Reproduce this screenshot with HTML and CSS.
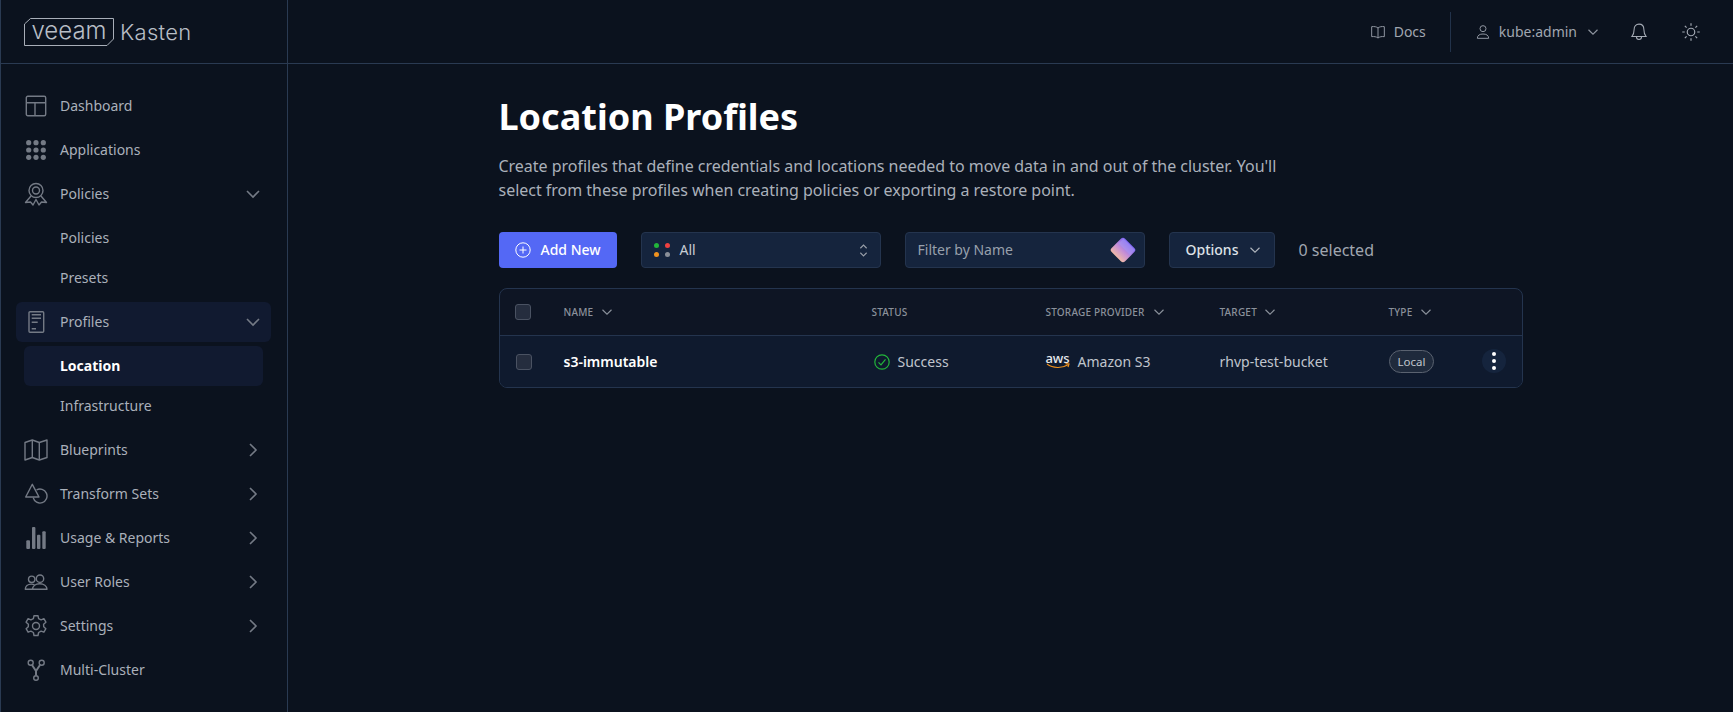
FILE: index.html
```html
<!DOCTYPE html>
<html lang="en">

<head>
    <meta charset="UTF-8">
    <meta name="viewport" content="width=device-width, initial-scale=1.0">
    <title>Location Profiles</title>
    <link rel="stylesheet" href="styles.css">
</head>

<body>
    <aside class="sidebar">
        <div class="brand">
            <span class="brand-box">
                <svg class="brand-outline" viewBox="0 0 90 28"><path d="M6.500 .5H89.500V21L83 27.500H.5V6z"/></svg>
                veeam
            </span>
            <span class="brand-name">Kasten</span>
        </div>
        <nav class="nav">
            <a class="nav-item">
                <svg class="nav-icon" viewBox="0 0 24 24"><rect x="2.300" y="2.300" width="19.400" height="19.400" rx="1.500"/><path d="M2.300 8.700h19.400M11 8.700v13"/></svg>
                <span class="nav-label">Dashboard</span>
            </a>
            <a class="nav-item">
                <svg class="nav-icon solid" viewBox="0 0 24 24"><circle cx="4.700" cy="4.700" r="2.600"/><circle cx="12" cy="4.700" r="2.600"/><circle cx="19.300" cy="4.700" r="2.600"/><circle cx="4.700" cy="12" r="2.600"/><circle cx="12" cy="12" r="2.600"/><circle cx="19.300" cy="12" r="2.600"/><circle cx="4.700" cy="19.300" r="2.600"/><circle cx="12" cy="19.300" r="2.600"/><circle cx="19.300" cy="19.300" r="2.600"/></svg>
                <span class="nav-label">Applications</span>
            </a>
            <a class="nav-item">
                <svg class="nav-icon" viewBox="0 0 24 24"><circle cx="12" cy="8.500" r="7"/><circle cx="12" cy="8.500" r="3.500"/><path d="M7 14 1.500 20.500l5-.5 2.500 3 3-5.500 3 5.500 2.500-3 5 .5L17 14"/></svg>
                <span class="nav-label">Policies</span>
                <svg class="chev" viewBox="0 0 16 16"><path d="M2 5l6 6 6-6"/></svg>
            </a>
            <div class="sub">
                <a class="sub-item">Policies</a>
                <a class="sub-item">Presets</a>
            </div>
            <a class="nav-item selected">
                <svg class="nav-icon" viewBox="0 0 24 24"><rect x="5" y="1.700" width="14.700" height="20.600" rx="1"/><path d="M7.700 4.700H17M7.700 8.300H17M7.700 12.300h6M7.700 18.700H12"/></svg>
                <span class="nav-label">Profiles</span>
                <svg class="chev" viewBox="0 0 16 16"><path d="M2 5l6 6 6-6"/></svg>
            </a>
            <div class="sub">
                <a class="sub-item current">Location</a>
                <a class="sub-item">Infrastructure</a>
            </div>
            <a class="nav-item">
                <svg class="nav-icon" viewBox="0 0 24 24"><path d="M1 4.500 8.300 2l7 2.500L23 2v17.500L15.300 22l-7-2.500L1 22z"/><path d="M8.300 2v17.500M15.300 4.500V22"/></svg>
                <span class="nav-label">Blueprints</span>
                <svg class="chev" viewBox="0 0 16 16"><path d="M5 2l6 6-6 6"/></svg>
            </a>
            <a class="nav-item">
                <svg class="nav-icon" viewBox="0 0 24 24"><path d="M8.300 2.300 1.700 15H15z"/><path d="M12.500 8A7 7 0 1 1 9.200 15.700"/></svg>
                <span class="nav-label">Transform Sets</span>
                <svg class="chev" viewBox="0 0 16 16"><path d="M5 2l6 6-6 6"/></svg>
            </a>
            <a class="nav-item">
                <svg class="nav-icon solid" viewBox="0 0 24 24"><rect x="2.300" y="14.300" width="3.700" height="8.700" rx="1"/><rect x="8" y="1" width="3.400" height="22" rx="1"/><rect x="13" y="8.700" width="3.400" height="14.300" rx="1"/><rect x="18.300" y="5.300" width="3.400" height="17.700" rx="1"/></svg>
                <span class="nav-label">Usage &amp; Reports</span>
                <svg class="chev" viewBox="0 0 16 16"><path d="M5 2l6 6-6 6"/></svg>
            </a>
            <a class="nav-item">
                <svg class="nav-icon" viewBox="0 0 24 24"><circle cx="7.700" cy="9.300" r="3.200"/><circle cx="16" cy="8.700" r="3.700"/><path d="M8.500 19.300H1.300c0-3 2.400-5.200 6-5.200 1.200 0 2.300.2 3.200.7"/><path d="M8.500 19.300c.2-3.400 3.200-5.600 7.200-5.600s7.100 2.200 7.300 5.600z"/></svg>
                <span class="nav-label">User Roles</span>
                <svg class="chev" viewBox="0 0 16 16"><path d="M5 2l6 6-6 6"/></svg>
            </a>
            <a class="nav-item">
                <svg class="nav-icon" viewBox="0 0 24 24"><circle cx="12" cy="12" r="3.500"/><path d="M10 1.700h4l.6 3 2.500 1.200 2.800-1.200 2 3.500-2.300 2 .1 2.600 2.200 1.900-2 3.500-2.800-1.100-2.500 1.400-.6 3h-4l-.6-3-2.500-1.400-2.800 1.100-2-3.500 2.200-1.900.1-2.600-2.300-2 2-3.500 2.800 1.200 2.500-1.200z"/></svg>
                <span class="nav-label">Settings</span>
                <svg class="chev" viewBox="0 0 16 16"><path d="M5 2l6 6-6 6"/></svg>
            </a>
            <a class="nav-item">
                <svg class="nav-icon" viewBox="0 0 24 24"><circle cx="6.700" cy="4.700" r="2.500"/><circle cx="17.700" cy="4.700" r="2.500"/><circle cx="12" cy="20" r="2.300"/><path class="thick" d="M8 7l4 6 4-6M12 13v4.500"/></svg>
                <span class="nav-label">Multi-Cluster</span>
            </a>
        </nav>
    </aside>

    <div class="main">
        <header class="topbar">
            <a class="top-link">
                <svg class="top-icon" viewBox="0 0 24 24"><path d="M12 6c-2-2-6-2.500-9.500-2v15c3.500-.5 7 0 9.500 2 2.500-2 6-2.500 9.500-2V4C18 3.500 14 4 12 6zM12 6v15"/></svg>
                Docs
            </a>
            <span class="top-divider"></span>
            <a class="top-link user">
                <svg class="top-icon" viewBox="0 0 24 24"><circle cx="12" cy="7" r="4.500"/><path d="M3.500 21.500c0-4.500 3.500-6.500 8.500-6.500s8.500 2 8.500 6.500z"/></svg>
                kube:admin
                <svg class="top-chev" viewBox="0 0 16 16"><path d="M2 5l6 6 6-6"/></svg>
            </a>
            <svg class="top-bell" viewBox="0 0 24 24"><path d="M12 1.500c-4 0-6.500 3-6.500 7 0 5-1 7-3 9.500h19c-2-2.500-3-4.500-3-9.500 0-4-2.500-7-6.500-7zM8.500 18c0 2.500 1.500 4 3.500 4s3.500-1.500 3.500-4"/></svg>
            <svg class="top-sun" viewBox="0 0 24 24"><circle cx="12" cy="12" r="4.500"/><path d="M12 1.500v3M12 19.500v3M1.500 12h3M19.500 12h3M4.600 4.600l2.100 2.100M17.300 17.300l2.100 2.100M4.600 19.400l2.100-2.100M17.300 6.700l2.100-2.100"/></svg>
        </header>

        <main class="content">
            <h1 class="title">Location Profiles</h1>
            <p class="intro">Create profiles that define credentials and locations needed to move data in and out of the cluster. You'll select from these profiles when creating policies or exporting a restore point.</p>

            <div class="toolbar">
                <button class="add-btn">
                    <svg class="add-icon" viewBox="0 0 16 16"><circle cx="8" cy="8" r="7.200"/><path d="M8 4.500v7M4.500 8h7"/></svg>
                    Add New
                </button>
                <div class="field status-field">
                    <span class="dots"><i class="dot green"></i><i class="dot red"></i><i class="dot orange"></i><i class="dot grey"></i></span>
                    <span class="field-value">All</span>
                    <svg class="updown" viewBox="0 0 10 16"><path d="M1.500 5.500 5 2l3.500 3.500M1.500 10.500 5 14l3.500-3.500"/></svg>
                </div>
                <div class="field filter-field">
                    <span class="placeholder">Filter by Name</span>
                    <svg class="gem" viewBox="0 0 26 26">
                        <defs>
                            <linearGradient id="gem-fill" x1="0.500" y1="0" x2="0.500" y2="1">
                                <stop offset="0" stop-color="#7a63f5"/>
                                <stop offset="0.550" stop-color="#c68fd6"/>
                                <stop offset="1" stop-color="#f0b9a8"/>
                            </linearGradient>
                        </defs>
                        <rect x="3.500" y="3.500" width="19" height="19" rx="3" transform="rotate(45 13 13)" fill="url(#gem-fill)"/>
                        <path d="M13.500 1.500 25 13l-5 5L8.500 6.500z" fill="#a99bf5" opacity="0.500"/>
                    </svg>
                </div>
                <button class="options-btn">
                    Options
                    <svg class="options-chev" viewBox="0 0 16 16"><path d="M2 5l6 6 6-6"/></svg>
                </button>
                <span class="selected-count">0 selected</span>
            </div>

            <div class="table">
                <div class="row head">
                    <div class="cell col-check"><span class="check"></span></div>
                    <div class="cell col-name">NAME <svg class="sort" viewBox="0 0 16 16"><path d="M2 5l6 6 6-6"/></svg></div>
                    <div class="cell col-status">STATUS</div>
                    <div class="cell col-provider">STORAGE PROVIDER <svg class="sort" viewBox="0 0 16 16"><path d="M2 5l6 6 6-6"/></svg></div>
                    <div class="cell col-target">TARGET <svg class="sort" viewBox="0 0 16 16"><path d="M2 5l6 6 6-6"/></svg></div>
                    <div class="cell col-type">TYPE <svg class="sort" viewBox="0 0 16 16"><path d="M2 5l6 6 6-6"/></svg></div>
                </div>
                <div class="row body">
                    <div class="cell col-check"><span class="check"></span></div>
                    <div class="cell col-name name-value">s3-immutable</div>
                    <div class="cell col-status">
                        <svg class="ok" viewBox="0 0 16 16"><circle cx="8" cy="8" r="7.200"/><path d="M4.500 8.300 7 10.800l4.500-5.500"/></svg>
                        Success
                    </div>
                    <div class="cell col-provider">
                        <span class="aws"><span class="aws-word">aws</span><svg class="aws-smile" viewBox="0 0 24 6"><path class="smile" d="M1 1c6 4.500 15 4.500 21 .8"/><path class="smile" d="M19.500 .6 23 1l-1 3"/></svg></span>
                        Amazon S3
                    </div>
                    <div class="cell col-target">rhvp-test-bucket</div>
                    <div class="cell col-type"><span class="pill">Local</span></div>
                    <button class="more"><i></i><i></i><i></i></button>
                </div>
            </div>
        </main>
    </div>
</body>

</html>
```

FILE: styles.css
```css
* {
    box-sizing: border-box;
}

html,
body {
    height: 100%;
}

body {
    margin: 0;
    display: flex;
    height: 712px;
    overflow: hidden;
    background-color: #0b121e;
    color: #aab0ba;
    font-family: "Noto Sans", sans-serif;
    font-size: 14px;
}

/* sidebar */
.sidebar {
    width: 288px;
    flex: none;
    border-left: 1px solid #2a3a52;
    border-right: 1px solid #2a3a52;
}

.brand {
    height: 64px;
    border-bottom: 1px solid #2a3a52;
    display: flex;
    align-items: center;
    gap: 6px;
    padding: 0 0 0 23px;
    color: #b8bec6;
}

.brand-box {
    position: relative;
    width: 90px;
    height: 28px;
    font-family: "Inter", sans-serif;
    font-size: 24px;
    font-weight: 300;
    line-height: 26px;
    text-align: center;
    letter-spacing: 0;
}

.brand-outline {
    position: absolute;
    left: 0;
    top: 0;
    width: 90px;
    height: 28px;
    fill: none;
    stroke: #a8aeb8;
    stroke-width: 1;
}

.brand-name {
    font-family: "Inter", sans-serif;
    font-size: 22px;
    font-weight: 300;
    letter-spacing: 0.3px;
}

.nav {
    padding: 22px 16px 0 15px;
    display: flex;
    flex-direction: column;
    gap: 4px;
}

.nav-item {
    height: 40px;
    display: flex;
    align-items: center;
    padding: 0 8px;
    border-radius: 6px;
}

.nav-item.selected {
    background-color: #111a30;
}

.nav-icon {
    width: 24px;
    height: 24px;
    flex: none;
    margin-right: 12px;
    fill: none;
    stroke: #747a85;
    stroke-width: 1.4;
    stroke-linejoin: round;
}

.nav-icon.solid {
    fill: #747a85;
    stroke: none;
}

.nav-icon .thick {
    stroke-width: 2;
}

.nav-label {
    flex: 1;
    padding-bottom: 2px;
}

.chev {
    width: 16px;
    height: 16px;
    margin-right: 2px;
    fill: none;
    stroke: #747a85;
    stroke-width: 1.6;
}

.sub {
    display: flex;
    flex-direction: column;
    padding: 0 8px;
}

.sub-item {
    height: 40px;
    display: flex;
    align-items: center;
    padding: 0 0 2px 36px;
    border-radius: 6px;
}

.sub-item.current {
    background-color: #111a30;
    color: #ffffff;
    font-weight: 700;
}

/* top bar */
.main {
    flex: 1;
    min-width: 0;
}

.topbar {
    height: 64px;
    border-bottom: 1px solid #2a3a52;
    display: flex;
    align-items: center;
    justify-content: flex-end;
    padding-right: 32px;
    color: #a0a6b0;
}

.top-link {
    display: flex;
    align-items: center;
    gap: 8px;
}

.top-icon {
    width: 16px;
    height: 16px;
    fill: none;
    stroke: #8f95a0;
    stroke-width: 1.500;
}

.top-divider {
    width: 1px;
    height: 40px;
    margin: 0 24px;
    background-color: #22324a;
}

.top-chev {
    width: 12px;
    height: 12px;
    margin-left: 2px;
    fill: none;
    stroke: #8f95a0;
    stroke-width: 1.500;
}

.top-bell,
.top-sun {
    fill: none;
    stroke: #a5abb5;
    stroke-width: 1.400;
}

.top-bell {
    width: 18px;
    height: 18px;
    margin-left: 31px;
}

.top-sun {
    width: 20px;
    height: 20px;
    margin-left: 33px;
}

/* content */
.content {
    width: 1024px;
    margin: 0 auto;
    padding-top: 31px;
}

.title {
    margin: 0;
    color: #ffffff;
    font-size: 36px;
    line-height: 44px;
    font-weight: 700;
}

.intro {
    margin: 15px 0 0;
    width: 820px;
    font-size: 16px;
    line-height: 24px;
    letter-spacing: -0.02px;
}

.toolbar {
    margin-top: 30px;
    display: flex;
    align-items: center;
}

.add-btn {
    width: 118px;
    height: 36px;
    border: none;
    border-radius: 4px;
    background-color: #5468f5;
    color: #ffffff;
    font-family: inherit;
    font-size: 14px;
    font-weight: 500;
    display: flex;
    align-items: center;
    padding: 0 0 1px 16px;
    gap: 10px;
}

.add-icon {
    width: 16px;
    height: 16px;
    fill: none;
    stroke: #ffffff;
    stroke-width: 1;
}

.field {
    height: 36px;
    background-color: #15243d;
    border: 1px solid #24344e;
    border-radius: 4px;
    display: flex;
    align-items: center;
}

.status-field {
    width: 240px;
    margin-left: 24px;
    padding: 0 12px;
}

.dots {
    width: 16px;
    display: grid;
    grid-template-columns: 5px 5px;
    gap: 4px;
    justify-content: space-between;
    margin-right: 10px;
}

.dot {
    width: 5px;
    height: 5px;
    border-radius: 50%;
}

.dot.green { background-color: #22b53a; }
.dot.red { background-color: #ee4040; }
.dot.orange { background-color: #f0921e; }
.dot.grey { background-color: #8a8f98; }

.field-value {
    flex: 1;
    padding-bottom: 2px;
    color: #c8cdd5;
}

.updown {
    width: 9px;
    height: 15px;
    fill: none;
    stroke: #9aa0aa;
    stroke-width: 1.200;
}

.filter-field {
    width: 240px;
    margin-left: 24px;
    padding: 0 8px 0 12px;
}

.placeholder {
    flex: 1;
    padding-bottom: 2px;
    color: #98a0ac;
}

.gem {
    width: 26px;
    height: 26px;
}

.options-btn {
    width: 106px;
    height: 36px;
    margin-left: 24px;
    background-color: #15243d;
    border: 1px solid #24344e;
    border-radius: 4px;
    color: #dfe2e7;
    font-family: inherit;
    font-size: 14px;
    font-weight: 500;
    display: flex;
    align-items: center;
    padding: 0 0 1px 16px;
    gap: 11px;
}

.options-chev {
    width: 12px;
    height: 12px;
    fill: none;
    stroke: #b0b5bd;
    stroke-width: 1.500;
}

.selected-count {
    margin-left: 24px;
    font-size: 16px;
    color: #a0a6b0;
}

/* table */
.table {
    margin-top: 20px;
    border: 1px solid #24344e;
    border-radius: 8px;
    overflow: hidden;
    background-color: #0e1524;
}

.row {
    display: flex;
    align-items: center;
    position: relative;
}

.row.head {
    height: 47px;
    border-bottom: 1px solid #24344e;
    color: #8b919b;
    font-size: 10px;
    font-weight: 500;
    letter-spacing: 0.2px;
}

.row.body {
    height: 51px;
    background-color: #0f1a2e;
    color: #c0c5cd;
}

.cell {
    display: flex;
    align-items: center;
}

.col-check {
    width: 64px;
    padding-left: 15px;
}

.row.body .col-check {
    padding-left: 16px;
}

.col-name {
    width: 308px;
    gap: 8px;
}

.col-status {
    width: 174px;
    gap: 8px;
}

.col-provider {
    width: 174px;
    gap: 8px;
}

.col-target {
    width: 169px;
    gap: 7px;
}

.col-type {
    gap: 8px;
}

.name-value {
    color: #ffffff;
    font-weight: 600;
}

.check {
    width: 16px;
    height: 16px;
    border: 1px solid #4a5262;
    border-radius: 3px;
    background-color: #252d3e;
}

.sort {
    width: 12px;
    height: 12px;
    fill: none;
    stroke: #8b919b;
    stroke-width: 1.500;
}

.ok {
    width: 16px;
    height: 16px;
    margin-left: 2px;
    fill: none;
    stroke: #22b53a;
    stroke-width: 1.200;
}

.aws {
    width: 24px;
    display: flex;
    flex-direction: column;
    align-items: center;
    line-height: 10px;
}

.aws-word {
    color: #e8eaee;
    font-family: "Noto Sans", sans-serif;
    font-size: 13px;
    font-weight: 500;
    line-height: 9px;
}

.aws-smile {
    width: 24px;
    height: 6px;
    display: block;
}

.smile {
    fill: none;
    stroke: #f0921e;
    stroke-width: 1.200;
}

.pill {
    height: 23px;
    padding: 0 8px;
    border: 1px solid #5a6270;
    border-radius: 12px;
    background-color: #1f2a3c;
    font-size: 11.500px;
    display: flex;
    align-items: center;
}

.more {
    position: absolute;
    right: 16px;
    top: 13px;
    width: 24px;
    height: 24px;
    padding: 0;
    border: none;
    border-radius: 50%;
    background-color: #15243d;
    display: flex;
    flex-direction: column;
    align-items: center;
    justify-content: center;
    gap: 3px;
}

.more i {
    width: 4px;
    height: 4px;
    border-radius: 50%;
    background-color: #ffffff;
}
```
